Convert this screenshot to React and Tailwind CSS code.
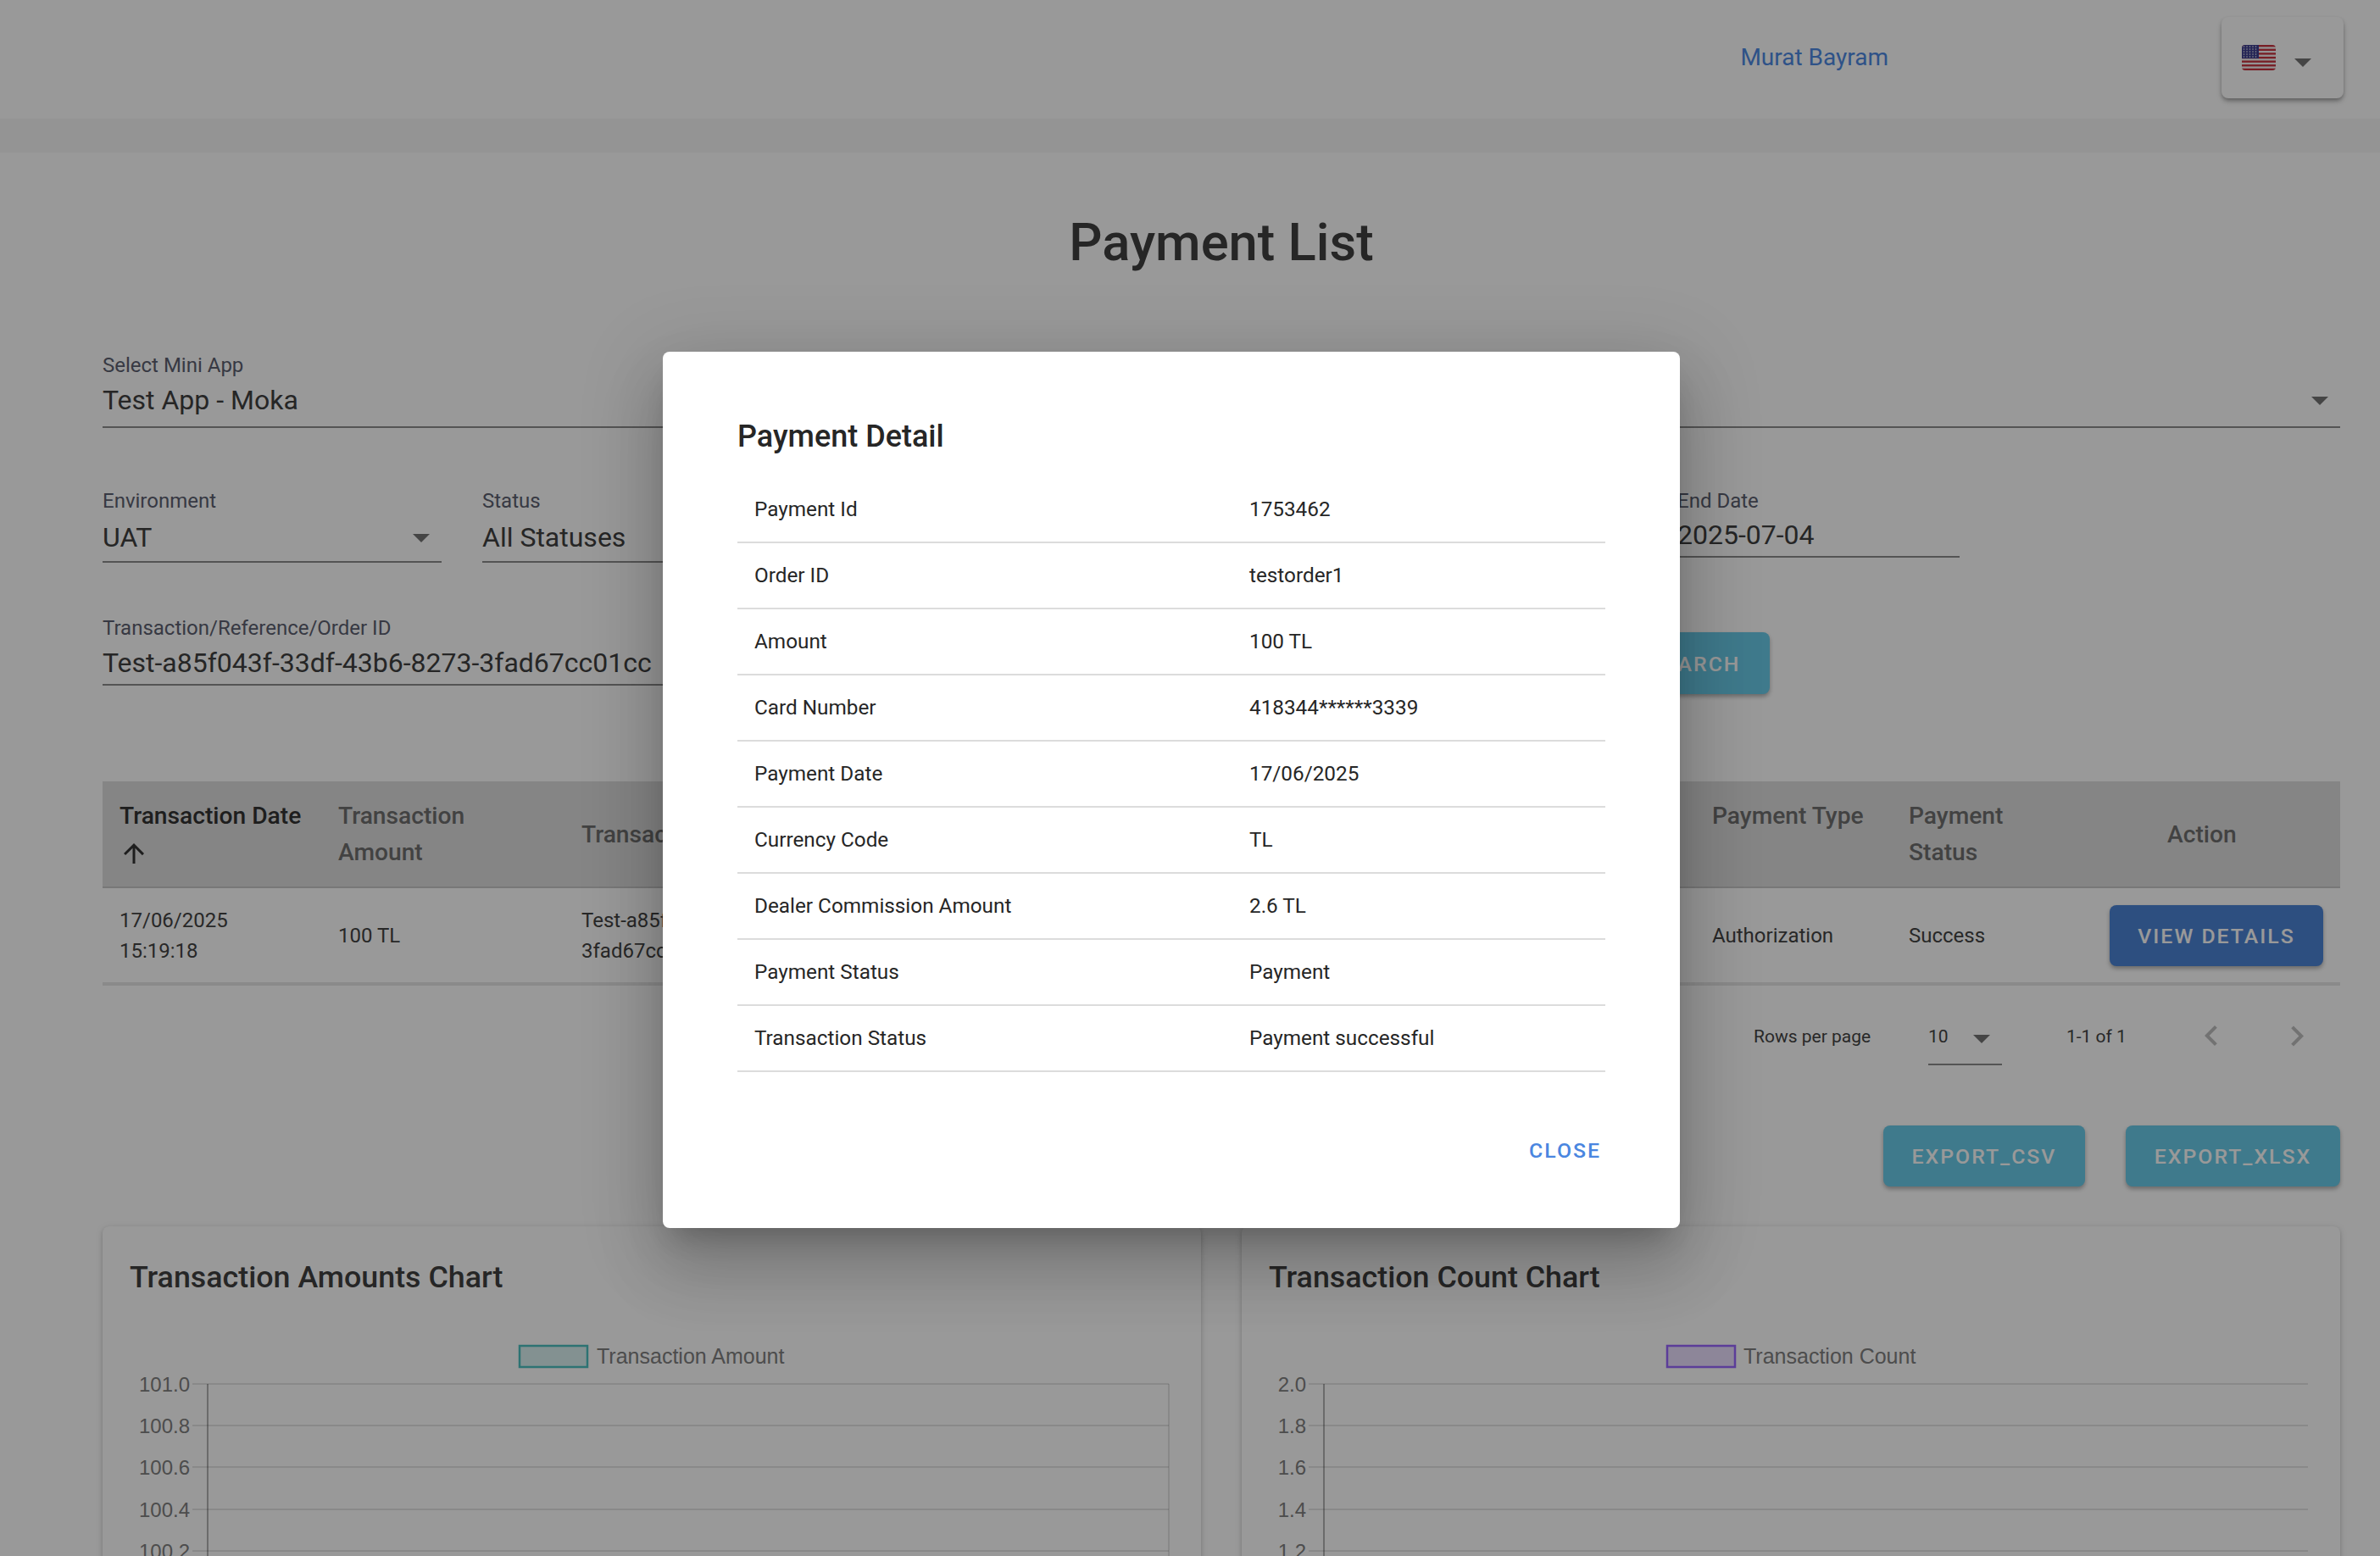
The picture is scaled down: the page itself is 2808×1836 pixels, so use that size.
const font = { fontFamily: 'Roboto, sans-serif' };

function Caret({ className = '' }) {
  return (
    <svg viewBox="0 0 24 24" className={`w-12 h-12 fill-black/55 shrink-0 ${className}`}>
      <path d="M7 10l5 5 5-5z" />
    </svg>
  );
}

function Flag() {
  const stripes = [0, 2, 4, 6, 8, 10, 12];
  return (
    <svg viewBox="0 0 40 30" className="w-10 h-[30px] block">
      <defs>
        <clipPath id="flagclip"><rect width="40" height="30" rx="4" /></clipPath>
      </defs>
      <g clipPath="url(#flagclip)">
        <rect width="40" height="30" fill="#f5f5f5" />
        {stripes.map((s) => (
          <rect key={s} y={s * 2.31} width="40" height="2.31" fill="#c8323f" />
        ))}
        <rect width="20" height="16" fill="#3f3f8f" />
        {[2, 5, 8, 11, 14].map((y) =>
          [2, 5.5, 9, 12.5, 16].map((x) => <circle key={`${x}-${y}`} cx={x + 0.5} cy={y} r="0.8" fill="#eee" />)
        )}
      </g>
    </svg>
  );
}

function Field({ label, value, className = '', pad = 'h-[56px]', caret = false }) {
  return (
    <div className={`border-b-2 border-[#8d8d8d] ${className}`}>
      <div className="text-[24px] leading-[30px] text-[#5c6070]">{label}</div>
      <div className={`flex items-center justify-between text-[32px] text-[#404040] ${pad}`}>
        <span className="whitespace-nowrap">{value}</span>
        {caret && <Caret />}
      </div>
    </div>
  );
}

function Chart({ legend, legendColor, legendFill, boxX, textX, axis, right, labels, rightBorder }) {
  const ys = [60, 109, 158, 208, 257, 306];
  return (
    <svg className="block w-full h-[330px]" style={{ fontFamily: '"Liberation Sans", sans-serif' }}>
      <rect x={boxX} y="15" width="80" height="25" fill={legendFill} stroke={legendColor} strokeWidth="2.5" />
      <text x={textX} y="36" fontSize="25" fill="#808080">{legend}</text>
      {ys.map((y, i) => (
        <g key={y}>
          <line x1={axis - 18} x2={right} y1={y} y2={y} stroke="rgba(0,0,0,0.1)" strokeWidth="2" />
          <text x={axis - 21} y={y + 9} fontSize="24" fill="#808080" textAnchor="end">{labels[i]}</text>
        </g>
      ))}
      <line x1={axis} x2={axis} y1="60" y2="330" stroke="rgba(0,0,0,0.3)" strokeWidth="2" />
      {rightBorder && <line x1={right} x2={right} y1="60" y2="330" stroke="rgba(0,0,0,0.1)" strokeWidth="2" />}
    </svg>
  );
}

const rows = [
  ['Payment Id', '1753462'],
  ['Order ID', 'testorder1'],
  ['Amount', '100 TL'],
  ['Card Number', '418344******3339'],
  ['Payment Date', '17/06/2025'],
  ['Currency Code', 'TL'],
  ['Dealer Commission Amount', '2.6 TL'],
  ['Payment Status', 'Payment'],
  ['Transaction Status', 'Payment successful'],
];

const th = 'text-[28.2px] leading-[43px] font-medium text-[#6f6f6f] pl-5 flex flex-col justify-center';
const td = 'text-[24px] leading-9 text-[#444] pl-5 flex flex-col justify-center';
const btn = 'rounded-lg text-white text-[24.8px] font-medium tracking-[2px] pt-[2px] shadow-[0_3px_5px_rgba(0,0,0,0.3)]';
const card = 'flex-1 rounded-lg bg-white shadow-[0_4px_2px_-2px_rgba(0,0,0,0.2),0_2px_4px_rgba(0,0,0,0.14),0_2px_10px_rgba(0,0,0,0.12)]';

export default function App() {
  return (
    <div className="relative h-[1836px] w-[2808px] overflow-hidden bg-white" style={font}>
      <header className="h-[140px] flex justify-end items-start bg-white">
        <span className="text-[28px] leading-[36px] mt-[50px] mr-[393px] text-[#4e89e3]">Murat Bayram</span>
        <div className="mt-5 mr-[43px] w-[144px] h-[96px] rounded-lg bg-white shadow-[0_4px_6px_-1px_rgba(0,0,0,0.3),0_2px_4px_rgba(0,0,0,0.15)] flex items-start pl-6 pt-[33px] gap-2">
          <Flag />
          <Caret className="-mt-[4px]" />
        </div>
      </header>
      <div className="h-10 bg-[#f7f7f7]" />

      <main className="pl-[121px] pr-[47px]">
        <h1 className="text-center text-[61.5px] leading-[70px] font-medium text-[#404040] mt-[71px]">Payment List</h1>

        <Field
          className="mt-[95px]"
          label="Select Mini App"
          value="Test App - Moka"
          pad="h-[57px] pb-[6px]"
          caret
        />

        <div className="flex mt-[71px] items-start">
          <Field className="w-[400px]" label="Environment" value="UAT" caret />
          <Field className="w-[400px] ml-12" label="Status" value="All Statuses" />
          <Field className="w-[333px] ml-[1010px]" label="End Date" value="2025-07-04" pad="h-[50px]" />
        </div>

        <div className="flex mt-[62px] items-start">
          <Field className="w-[900px]" label="Transaction/Reference/Order ID" value="Test-a85f043f-33df-43b6-8273-3fad67cc01cc" pad="h-[51px]" />
          <button className={`${btn} ml-[891px] mt-[20px] w-[176px] h-[73px] bg-[#69cbe9]`}>SEARCH</button>
        </div>

        <section className="mt-[103px]">
          <div className="grid grid-cols-[258px_287px_1334px_232px_237px_292px] h-[126px] bg-[#dedede] border-b-2 border-[#c8c8c8]">
            <div className={`${th} !justify-start pt-[19px]`}>
              <span className="text-[#333] whitespace-nowrap">Transaction Date</span>
              <svg viewBox="0 0 24 24" className="w-9 h-9 fill-[#333] -ml-[1px] mt-[5px]">
                <path d="M4 12l1.41 1.41L11 7.83V20h2V7.83l5.58 5.59L20 12l-8-8-8 8z" />
              </svg>
            </div>
            <div className={th}><span className="w-[180px]">Transaction Amount</span></div>
            <div className={th}>Transaction ID</div>
            <div className={`${th} !justify-start pt-[19px]`}><span className="whitespace-nowrap">Payment Type</span></div>
            <div className={th}><span className="w-[120px]">Payment Status</span></div>
            <div className={`${th} !pl-[88px]`}>Action</div>
          </div>
          <div className="grid grid-cols-[258px_287px_1334px_232px_237px_292px] h-[115px] border-b-4 border-[#e6e6e6]">
            <div className={td}><span>17/06/2025</span><span>15:19:18</span></div>
            <div className={td}>100 TL</div>
            <div className={td}><span>Test-a85f043f-33df-43b6-8273-</span><span>3fad67cc01cc</span></div>
            <div className={td}>Authorization</div>
            <div className={td}>Success</div>
            <div className="pl-5 flex items-center">
              <button className={`${btn} w-[252px] h-[72px] bg-[#4c84d6]`}>VIEW DETAILS</button>
            </div>
          </div>
        </section>

        <div className="flex items-start mt-[36px] text-[#444] text-[21px] leading-[48px] ml-[1948px]">
          <span className="w-[206px] whitespace-nowrap">Rows per page</span>
          <div className="w-[87px] h-[58px] border-b-2 border-[#8d8d8d] flex items-start justify-between">
            <span>10</span>
            <Caret className="mt-[2px]" />
          </div>
          <span className="ml-[76px] w-[147px] whitespace-nowrap">1-1 of 1</span>
          <svg viewBox="0 0 24 24" className="w-12 h-12 fill-black/25"><path d="M15.41 16.09l-4.58-4.59 4.58-4.59L14 5.5l-6 6 6 6z" /></svg>
          <svg viewBox="0 0 24 24" className="w-12 h-12 fill-black/25 ml-[53px]"><path d="M8.59 16.34l4.58-4.59-4.58-4.59L10 5.75l6 6-6 6z" /></svg>
        </div>

        <div className="flex justify-end gap-12 mt-[71px]">
          <button className={`${btn} w-[238px] h-[72px] bg-[#69cbe9]`}>EXPORT_CSV</button>
          <button className={`${btn} w-[253px] h-[72px] bg-[#69cbe9]`}>EXPORT_XLSX</button>
        </div>

        <div className="flex gap-12 mt-[47px]">
          <div className={card}>
            <h2 className="text-[35.8px] leading-[44px] font-medium text-[#404040] mt-[38px] ml-[32px]">Transaction Amounts Chart</h2>
            <div className="mt-[44px]">
              <Chart legend="Transaction Amount" legendColor="rgb(75,192,192)" legendFill="rgba(75,192,192,0.2)" boxX={492} textX={583} axis={124} right={1258} labels={['101.0', '100.8', '100.6', '100.4', '100.2', '100.0']} rightBorder />
            </div>
          </div>
          <div className={card}>
            <h2 className="text-[35.8px] leading-[44px] font-medium text-[#404040] mt-[38px] ml-[32px]">Transaction Count Chart</h2>
            <div className="mt-[44px]">
              <Chart legend="Transaction Count" legendColor="rgb(153,102,255)" legendFill="rgba(153,102,255,0.2)" boxX={502} textX={592} axis={97} right={1258} labels={['2.0', '1.8', '1.6', '1.4', '1.2', '1.0']} />
            </div>
          </div>
        </div>
      </main>

      <div className="absolute inset-0 bg-black/40" />

      <div className="absolute left-[782px] top-[415px] w-[1200px] h-[1034px] rounded-lg bg-white shadow-[0_22px_30px_-14px_rgba(0,0,0,0.2),0_48px_76px_6px_rgba(0,0,0,0.14),0_18px_92px_16px_rgba(0,0,0,0.12)] px-[88px] pt-[77px]">
        <h2 className="text-[36px] leading-[46px] font-medium text-[#262626]">Payment Detail</h2>
        <div className="mt-[25px]">
          {rows.map(([k, v]) => (
            <div key={k} className="h-[78px] grid grid-cols-[584px_1fr] items-center border-b-2 border-[#dcdcdc] pl-5 text-[24.3px] text-[#262626]">
              <span>{k}</span>
              <span>{v}</span>
            </div>
          ))}
        </div>
        <div className="flex justify-end mt-[75px] pr-[5px]">
          <span className="text-[24.8px] leading-9 font-medium tracking-[2px] text-[#4a86e0]">CLOSE</span>
        </div>
      </div>
    </div>
  );
}
